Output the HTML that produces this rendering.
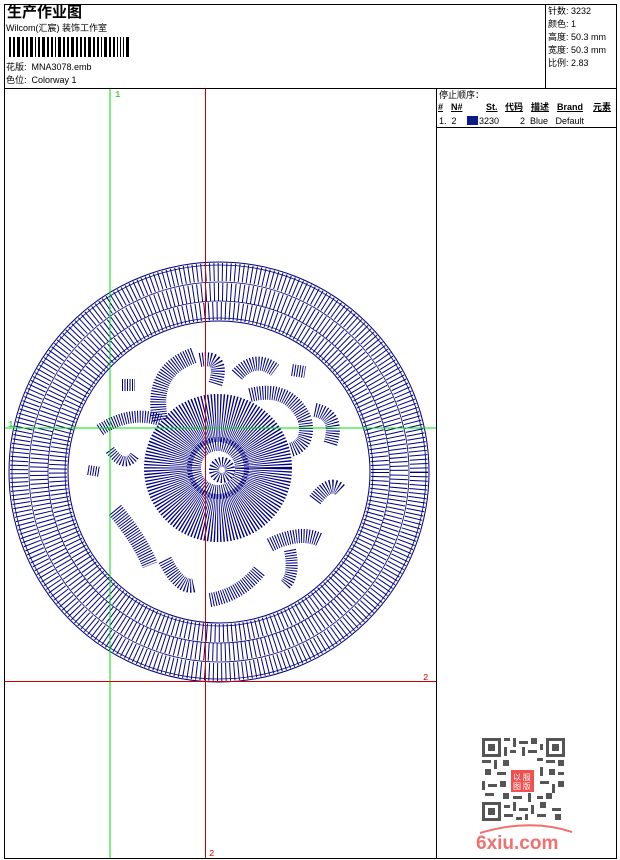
<!DOCTYPE html>
<html><head><meta charset="utf-8"><style>
*{margin:0;padding:0;box-sizing:border-box}
body{width:620px;height:860px;background:#fff;position:relative;overflow:hidden;font-family:"Liberation Sans","Noto Sans CJK SC",sans-serif;color:#000}
.t{position:absolute;font-size:9px;line-height:11px;white-space:nowrap}
.b{position:absolute;background:#000}
</style></head><body>
<div class="b" style="left:4px;top:4px;width:613px;height:1px"></div>
<div class="b" style="left:4px;top:858px;width:613px;height:1px"></div>
<div class="b" style="left:4px;top:4px;width:1px;height:855px"></div>
<div class="b" style="left:616px;top:4px;width:1px;height:855px"></div>
<div class="b" style="left:4px;top:88px;width:613px;height:1px"></div>
<div class="b" style="left:545px;top:4px;width:1px;height:84px"></div>
<div class="b" style="left:436px;top:88px;width:1px;height:771px"></div>
<div class="b" style="left:436px;top:127px;width:181px;height:1px"></div>

<div class="t" style="left:7px;top:4px;font-size:15px;line-height:18px;font-weight:bold">生产作业图</div>
<div class="t" style="left:6px;top:23px">Wilcom(汇宸) 装饰工作室</div>
<svg style="position:absolute;left:9px;top:37px" width="132" height="20">
<g fill="#000">
<rect x="0" y="0" width="2" height="20"/><rect x="4" y="0" width="2" height="20"/><rect x="8" y="0" width="3" height="20"/><rect x="13" y="0" width="2" height="20"/><rect x="17" y="0" width="2" height="20"/><rect x="21" y="0" width="3" height="20"/><rect x="26" y="0" width="1" height="20"/><rect x="29" y="0" width="2" height="20"/><rect x="33" y="0" width="3" height="20"/><rect x="38" y="0" width="2" height="20"/><rect x="42" y="0" width="2" height="20"/><rect x="46" y="0" width="1" height="20"/><rect x="49" y="0" width="3" height="20"/><rect x="54" y="0" width="2" height="20"/><rect x="58" y="0" width="2" height="20"/><rect x="62" y="0" width="3" height="20"/><rect x="67" y="0" width="2" height="20"/><rect x="71" y="0" width="2" height="20"/><rect x="75" y="0" width="2" height="20"/><rect x="79" y="0" width="3" height="20"/><rect x="84" y="0" width="2" height="20"/><rect x="88" y="0" width="2" height="20"/><rect x="92" y="0" width="1" height="20"/><rect x="95" y="0" width="3" height="20"/><rect x="100" y="0" width="2" height="20"/><rect x="104" y="0" width="2" height="20"/><rect x="108" y="0" width="1" height="20"/><rect x="111" y="0" width="1" height="20"/><rect x="114" y="0" width="1" height="20"/><rect x="117" y="0" width="3" height="20"/>
</g></svg>
<div class="t" style="left:6px;top:62px">花版:&nbsp; MNA3078.emb</div>
<div class="t" style="left:6px;top:75px">色位:&nbsp; Colorway 1</div>

<div class="t" style="left:548px;top:6px">针数: 3232</div>
<div class="t" style="left:548px;top:19px">颜色: 1</div>
<div class="t" style="left:548px;top:32px">高度: 50.3 mm</div>
<div class="t" style="left:548px;top:45px">宽度: 50.3 mm</div>
<div class="t" style="left:548px;top:58px">比例: 2.83</div>

<div class="t" style="left:439px;top:90px">停止顺序：</div>
<div class="t" style="left:438px;top:102px;font-weight:bold;text-decoration:underline">#</div>
<div class="t" style="left:451px;top:102px;font-weight:bold;text-decoration:underline">N#</div>
<div class="t" style="left:486px;top:102px;font-weight:bold;text-decoration:underline">St.</div>
<div class="t" style="left:505px;top:102px;font-weight:bold;text-decoration:underline">代码</div>
<div class="t" style="left:531px;top:102px;font-weight:bold;text-decoration:underline">描述</div>
<div class="t" style="left:557px;top:102px;font-weight:bold;text-decoration:underline">Brand</div>
<div class="t" style="left:593px;top:102px;font-weight:bold;text-decoration:underline">元素</div>
<div class="t" style="left:439px;top:116px">1.&nbsp; 2</div>
<div style="position:absolute;left:467px;top:116px;width:11px;height:9px;background:#0a1a8a"></div>
<div class="t" style="left:479px;top:116px">3230</div>
<div class="t" style="left:520px;top:116px">2&nbsp; Blue&nbsp;&nbsp; Default</div>

<svg style="position:absolute;left:0;top:0" width="620" height="860">
<g fill="none" stroke="#000080">
<circle cx="219" cy="472" r="210" stroke-width="1"/>
<circle cx="219" cy="472" r="151" stroke-width="1"/>
<circle cx="219" cy="472" r="200" stroke-width="18" stroke-dasharray="1 3.2"/>
<circle cx="219" cy="472" r="180" stroke-width="18" stroke-dasharray="1 3.2" stroke-dashoffset="1.5"/>
<circle cx="219" cy="472" r="161" stroke-width="18" stroke-dasharray="1 3.2"/>
<circle cx="219" cy="472" r="207" stroke-width="0.8"/>
<circle cx="219" cy="472" r="190" stroke-width="0.8"/>
<circle cx="219" cy="472" r="171" stroke-width="0.8"/>
<circle cx="219" cy="472" r="154" stroke-width="0.8"/>
<!-- flower -->
<circle cx="218" cy="468" r="50" stroke-width="48" stroke-dasharray="1 1.3"/>
<circle cx="218" cy="468" r="24" stroke-width="14" stroke-dasharray="1 1.5"/>
<circle cx="222" cy="470" r="8" stroke-width="10" stroke-dasharray="1 1.5"/>
<g stroke-dasharray="1 1.5">
<path d="M160 420 Q150 370 195 355" stroke-width="16"/>
<path d="M200 360 Q225 355 215 385" stroke-width="14"/>
<path d="M237 375 Q255 355 275 370" stroke-width="14"/>
<path d="M250 395 Q290 385 305 420 Q310 445 290 450" stroke-width="14"/>
<path d="M315 410 Q340 415 330 445" stroke-width="14"/>
<path d="M100 430 Q130 410 160 420" stroke-width="12"/>
<path d="M110 450 Q125 470 135 455" stroke-width="10"/>
<path d="M115 510 Q140 540 150 565" stroke-width="16"/>
<path d="M165 560 Q180 590 195 585" stroke-width="14"/>
<path d="M210 600 Q240 595 260 570" stroke-width="14"/>
<path d="M270 545 Q300 530 320 540" stroke-width="14"/>
<path d="M290 550 Q295 575 285 585" stroke-width="12"/>
<path d="M315 500 Q330 480 340 490" stroke-width="14"/>
<path d="M122 385 L135 385" stroke-width="12"/>
<path d="M292 370 L305 372" stroke-width="12"/>
<path d="M88 470 L100 472" stroke-width="10"/>
</g>
</g>
<line x1="110" y1="89" x2="110" y2="858" stroke="#00e000" stroke-width="1"/>
<line x1="5" y1="428" x2="436" y2="428" stroke="#00e000" stroke-width="1"/>
<line x1="205.5" y1="89" x2="205.5" y2="858" stroke="#c00" stroke-width="1"/>
<line x1="5" y1="681.5" x2="436" y2="681.5" stroke="#c00" stroke-width="1"/>
<text x="115" y="97" font-size="9" fill="#00c000" font-family="Liberation Mono,monospace">1</text>
<text x="8" y="427" font-size="9" fill="#00c000" font-family="Liberation Mono,monospace">1</text>
<text x="423" y="680" font-size="9" fill="#d00" font-family="Liberation Mono,monospace">2</text>
<text x="209" y="856" font-size="9" fill="#d00" font-family="Liberation Mono,monospace">2</text>
<!-- QR -->
<g fill="#555">
<rect x="482" y="738" width="19" height="19"/><rect x="485" y="741" width="13" height="13" fill="#fff"/><rect x="488" y="744" width="7" height="7"/>
<rect x="546" y="738" width="19" height="19"/><rect x="549" y="741" width="13" height="13" fill="#fff"/><rect x="552" y="744" width="7" height="7"/>
<rect x="482" y="802" width="19" height="19"/><rect x="485" y="805" width="13" height="13" fill="#fff"/><rect x="488" y="808" width="7" height="7"/>
<rect x="504" y="738" width="6" height="3"/><rect x="513" y="738" width="3" height="9"/><rect x="519" y="741" width="9" height="3"/><rect x="531" y="738" width="6" height="6"/><rect x="540" y="744" width="3" height="6"/>
<rect x="504" y="747" width="3" height="9"/><rect x="510" y="750" width="6" height="3"/><rect x="522" y="747" width="3" height="9"/><rect x="528" y="750" width="9" height="3"/>
<rect x="482" y="760" width="9" height="3"/><rect x="494" y="760" width="3" height="9"/><rect x="503" y="760" width="6" height="6"/><rect x="537" y="758" width="6" height="3"/><rect x="546" y="760" width="9" height="3"/><rect x="558" y="760" width="6" height="6"/>
<rect x="485" y="769" width="6" height="6"/><rect x="497" y="772" width="9" height="3"/><rect x="540" y="767" width="3" height="9"/><rect x="549" y="769" width="6" height="6"/><rect x="558" y="772" width="6" height="3"/>
<rect x="482" y="781" width="3" height="9"/><rect x="488" y="784" width="9" height="3"/><rect x="500" y="781" width="6" height="6"/><rect x="540" y="781" width="9" height="3"/><rect x="552" y="784" width="3" height="9"/><rect x="558" y="781" width="6" height="6"/>
<rect x="485" y="793" width="9" height="3"/><rect x="503" y="793" width="6" height="6"/><rect x="513" y="796" width="9" height="3"/><rect x="528" y="793" width="3" height="9"/><rect x="537" y="796" width="6" height="3"/><rect x="546" y="793" width="6" height="6"/>
<rect x="504" y="805" width="6" height="3"/><rect x="513" y="802" width="3" height="9"/><rect x="519" y="808" width="9" height="3"/><rect x="531" y="805" width="3" height="9"/><rect x="540" y="802" width="6" height="6"/><rect x="552" y="808" width="9" height="3"/>
<rect x="504" y="814" width="9" height="3"/><rect x="516" y="817" width="6" height="3"/><rect x="525" y="814" width="3" height="6"/><rect x="537" y="814" width="9" height="3"/><rect x="555" y="814" width="6" height="6"/>
</g>
<rect x="511" y="770" width="23" height="22" fill="#f05050"/>
<text x="513" y="780" font-size="8" fill="#fff" font-family="Noto Sans CJK SC,sans-serif">以 服</text>
<text x="513" y="789" font-size="8" fill="#fff" font-family="Noto Sans CJK SC,sans-serif">图 版</text>
<path d="M480 833 Q530 818 572 832" stroke="#f07070" stroke-width="2" fill="none"/>
<text x="476" y="849" font-size="19" font-weight="bold" fill="#f07070" font-family="Liberation Sans,sans-serif">6xiu.com</text>
</svg>
</body></html>
